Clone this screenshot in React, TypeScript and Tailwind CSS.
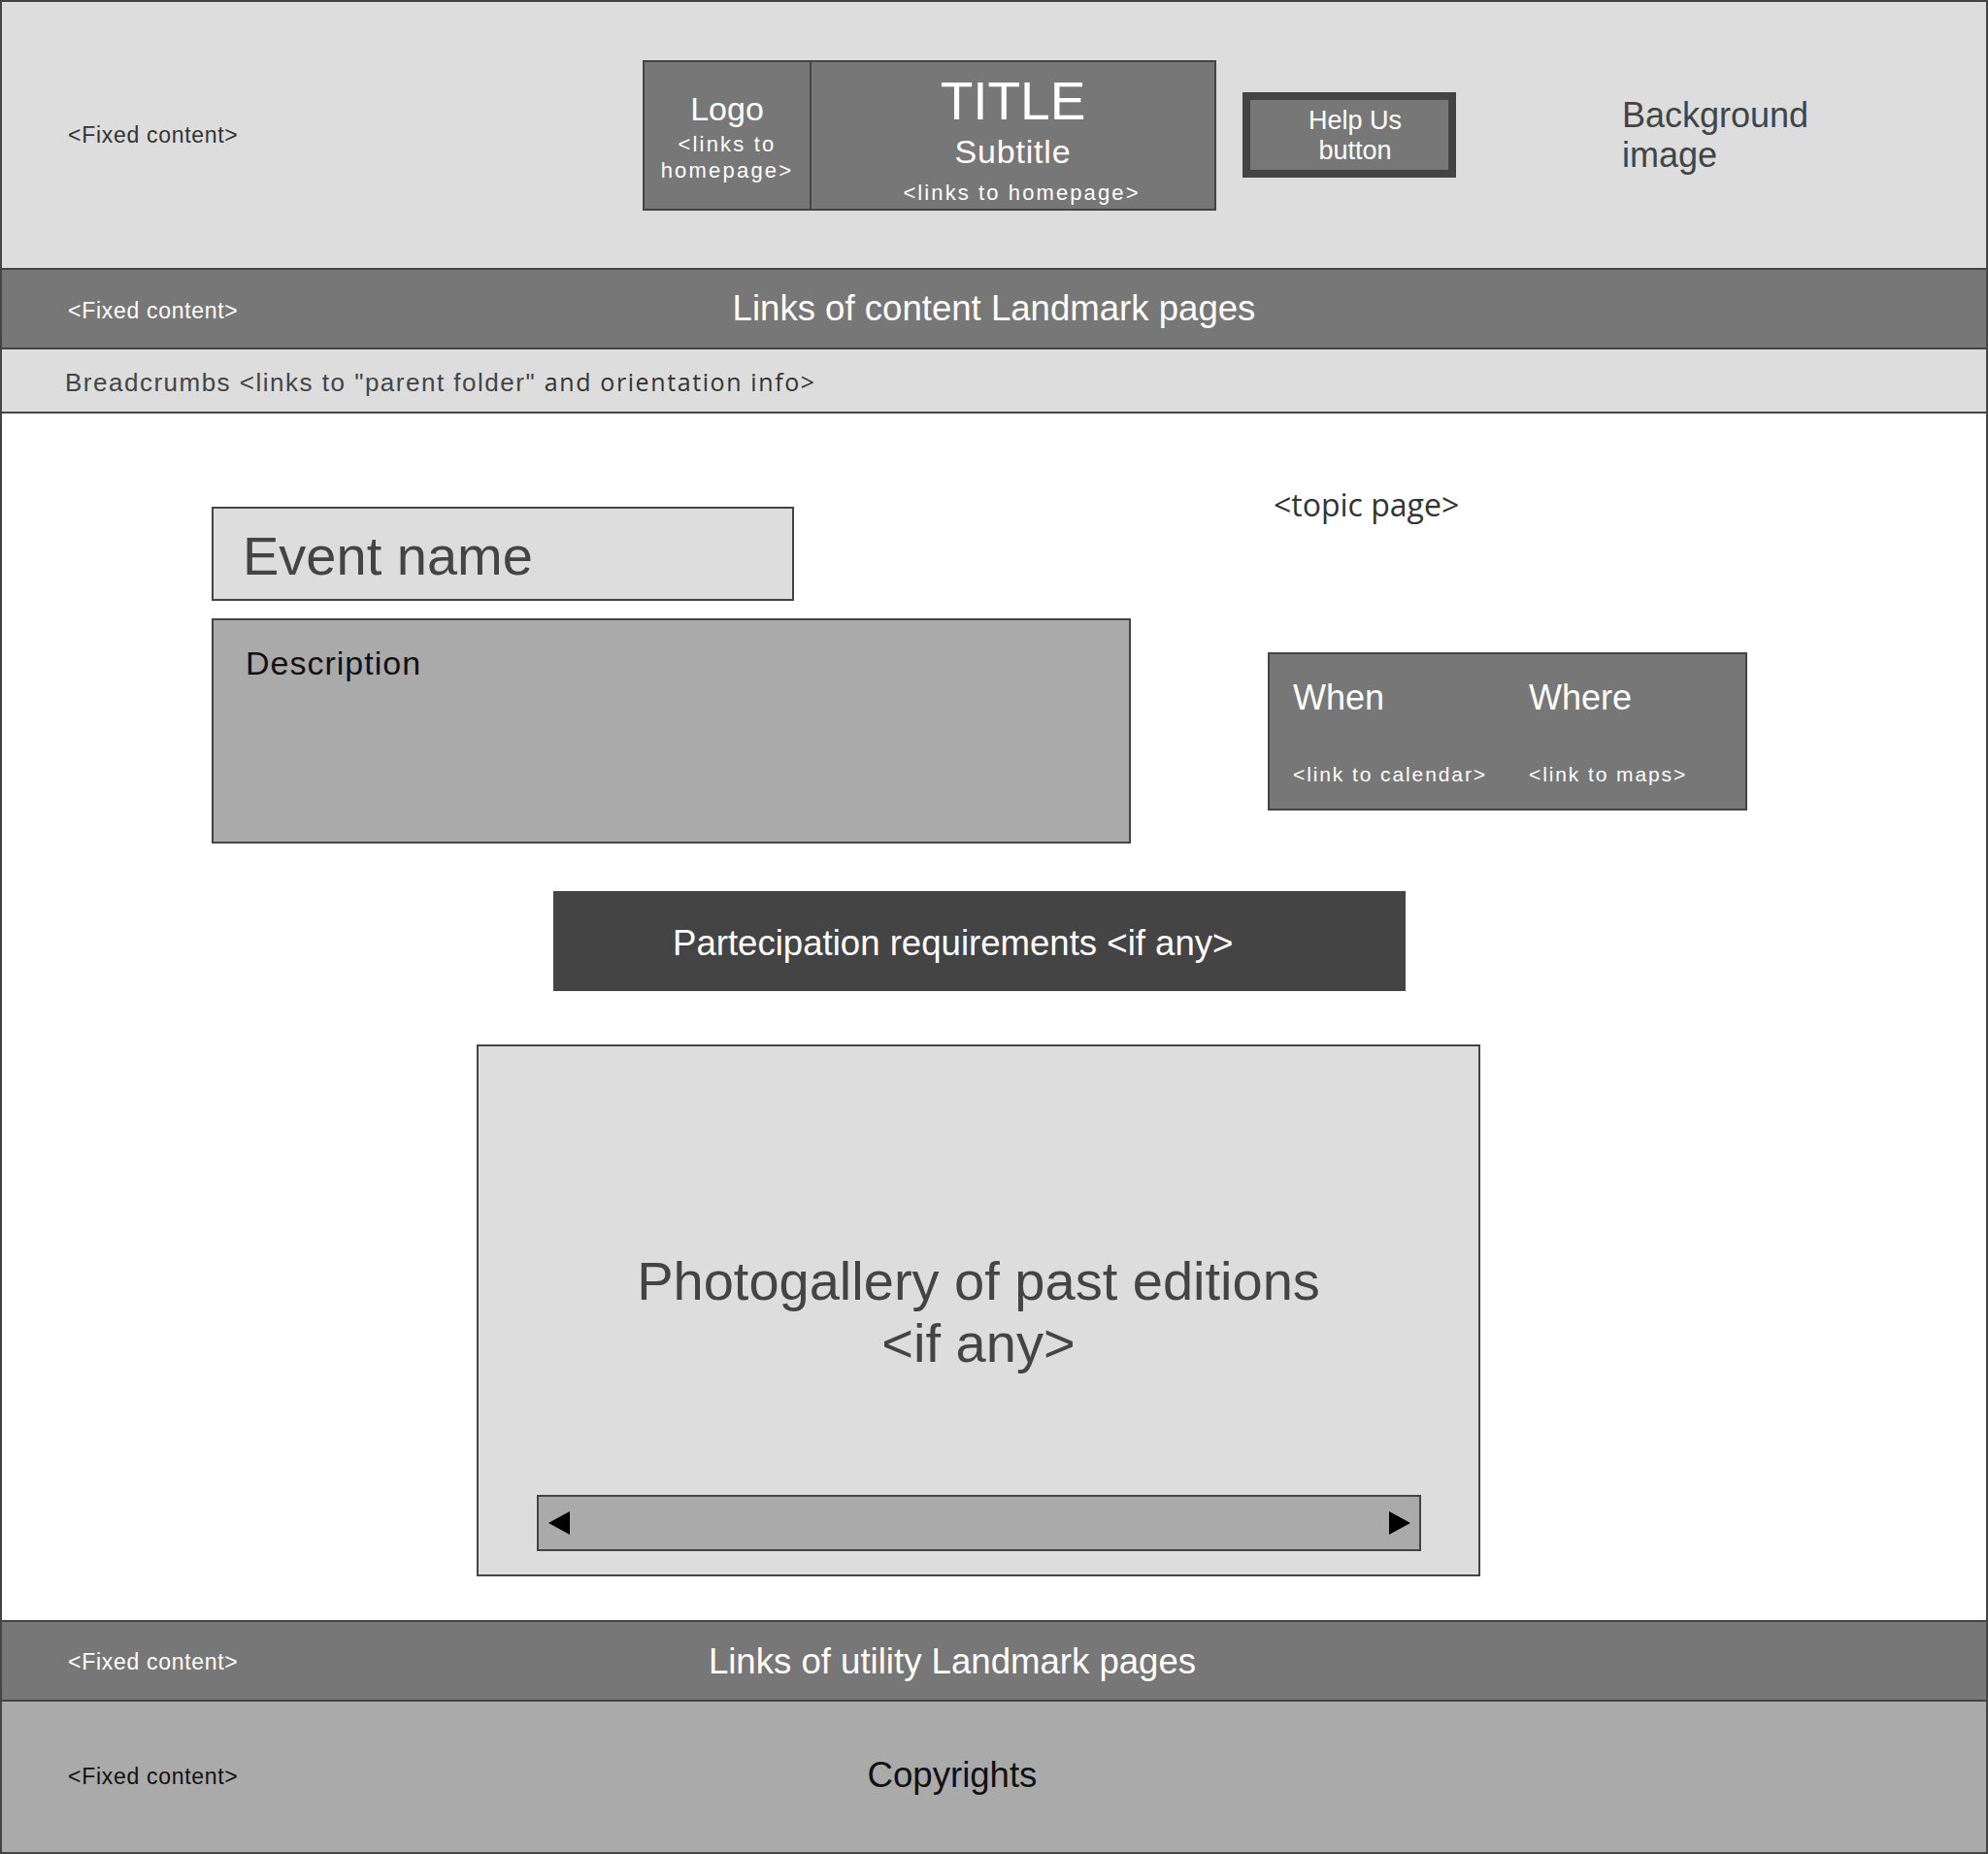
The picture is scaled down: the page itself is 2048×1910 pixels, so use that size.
import React from "react";

function TriLeft() {
  return (
    <svg width="22" height="24" viewBox="0 0 22 24">
      <polygon points="22,0 22,24 0,12" fill="#000" />
    </svg>
  );
}

function TriRight() {
  return (
    <svg width="22" height="24" viewBox="0 0 22 24">
      <polygon points="0,0 0,24 22,12" fill="#000" />
    </svg>
  );
}

export default function App() {
  return (
    <div className="w-[2048px] h-[1910px] border-2 border-[#444] flex flex-col bg-white font-['Liberation_Sans',Arial,sans-serif]">
      {/* Header */}
      <header className="h-[276px] shrink-0 border-b-2 border-[#444] bg-[#dddddd] flex items-center">
        <div className="w-[660px] shrink-0 pl-[68px] text-[23px] tracking-[0.7px] text-[#333]">
          &lt;Fixed content&gt;
        </div>
        <div className="w-[591px] h-[155px] shrink-0 border-2 border-[#444] bg-[#777777] flex text-white">
          <div className="w-[172px] shrink-0 border-r-2 border-[#444] flex flex-col items-center pt-[29px]">
            <div className="text-[34px] leading-[38px]">Logo</div>
            <div className="mt-[4px] text-[22px] leading-[27px] tracking-[2.2px] text-center">
              &lt;links to
              <br />
              homepage&gt;
            </div>
          </div>
          <div className="flex-1 flex flex-col items-center pt-[12px]">
            <div className="text-[55px] leading-[56px]">TITLE</div>
            <div className="text-[34px] leading-[48px] tracking-[0.8px]">Subtitle</div>
            <div className="mt-[5px] pl-[18px] text-[22px] leading-[27px] tracking-[2.1px]">&lt;links to homepage&gt;</div>
          </div>
        </div>
        <div className="ml-[27px] w-[220px] h-[88px] shrink-0 border-[8px] border-[#444] bg-[#777777] flex flex-col items-center justify-center pl-[12px] pt-[2px] text-[27px] leading-[31px] text-white">
          <div>Help Us</div>
          <div>button</div>
        </div>
        <div className="ml-[171px] text-[36px] leading-[41px] text-[#444]">
          Background
          <br />
          image
        </div>
      </header>

      {/* Content landmark nav */}
      <nav className="h-[82px] shrink-0 border-b-2 border-[#444] bg-[#777777] grid grid-cols-[1fr_auto_1fr] items-center text-white">
        <div className="pl-[68px] pt-[5px] text-[23px] tracking-[0.7px]">&lt;Fixed content&gt;</div>
        <div className="text-[36.6px]">Links of content Landmark pages</div>
        <div />
      </nav>

      {/* Breadcrumbs */}
      <div className="h-[66px] shrink-0 border-b-2 border-[#444] bg-[#dddddd] flex items-center pl-[65px] pt-[4px] text-[26px] tracking-[1.5px] text-[#444]">
        <span>Breadcrumbs &lt;links to "parent folder"&nbsp;</span>
        <span className="font-['Open_Sans',sans-serif] text-[#333] tracking-[1.6px] text-[25px]">and orientation info&gt;</span>
      </div>

      {/* Main */}
      <main className="flex-1 flex flex-col">
        <div className="flex items-start pt-[74px]">
          <div className="ml-[216px] pt-[22px] w-[947px] shrink-0 flex flex-col">
            <div className="w-[600px] h-[97px] border-2 border-[#444] bg-[#dddddd] flex items-center pl-[30px] pt-[4px] text-[56px] text-[#444]">
              Event name
            </div>
            <div className="mt-[18px] h-[232px] border-2 border-[#444] bg-[#aaaaaa] pl-[33px] pt-[25px] text-[34px] leading-[38px] tracking-[1px] text-[#111]">
              Description
            </div>
          </div>
          <div className="ml-[141px] w-[494px] shrink-0 flex flex-col">
            <div className="ml-[6px] font-['Open_Sans',sans-serif] text-[32px] leading-[40px] text-[#333]">
              &lt;topic page&gt;
            </div>
            <div className="mt-[132px] h-[163px] border-2 border-[#444] bg-[#777777] grid grid-cols-[243px_1fr] pl-[24px] pt-[25px] text-white">
              <div>
                <div className="text-[36px] leading-[40px]">When</div>
                <div className="mt-[45px] text-[21px] leading-[27px] tracking-[1.9px]">&lt;link to calendar&gt;</div>
              </div>
              <div>
                <div className="text-[36px] leading-[40px]">Where</div>
                <div className="mt-[45px] text-[21px] leading-[27px] tracking-[1.9px]">&lt;link to maps&gt;</div>
              </div>
            </div>
          </div>
        </div>

        <div className="mt-[49px] ml-[568px] w-[878px] h-[103px] bg-[#444444] flex items-center pl-[123px] pt-[5px] text-[36.6px] text-white">
          Partecipation requirements &lt;if any&gt;
        </div>

        <div className="mt-[55px] ml-[489px] w-[1034px] h-[548px] border-2 border-[#444] bg-[#dddddd] flex flex-col items-center pt-[210px]">
          <div className="text-[56px] leading-[64px] text-center text-[#444]">
            Photogallery of past editions
            <br />
            &lt;if any&gt;
          </div>
          <div className="mt-[124px] w-[911px] h-[58px] border-2 border-[#444] bg-[#aaaaaa] flex items-center justify-between pl-[10px] pr-[9px]">
            <TriLeft />
            <TriRight />
          </div>
        </div>
      </main>

      {/* Utility landmark nav */}
      <nav className="h-[84px] shrink-0 border-y-2 border-[#444] bg-[#777777] grid grid-cols-[1fr_auto_1fr] items-center pr-[86px] text-white">
        <div className="pl-[68px] pt-[3px] text-[23px] tracking-[0.7px]">&lt;Fixed content&gt;</div>
        <div className="pt-[2px] text-[36.6px]">Links of utility Landmark pages</div>
        <div />
      </nav>

      {/* Copyright */}
      <footer className="h-[155px] shrink-0 bg-[#aaaaaa] grid grid-cols-[1fr_auto_1fr] items-center pr-[86px] text-[#111]">
        <div className="pl-[68px] text-[23px] tracking-[0.7px]">&lt;Fixed content&gt;</div>
        <div className="pb-[2px] text-[36.6px]">Copyrights</div>
        <div />
      </footer>
    </div>
  );
}
